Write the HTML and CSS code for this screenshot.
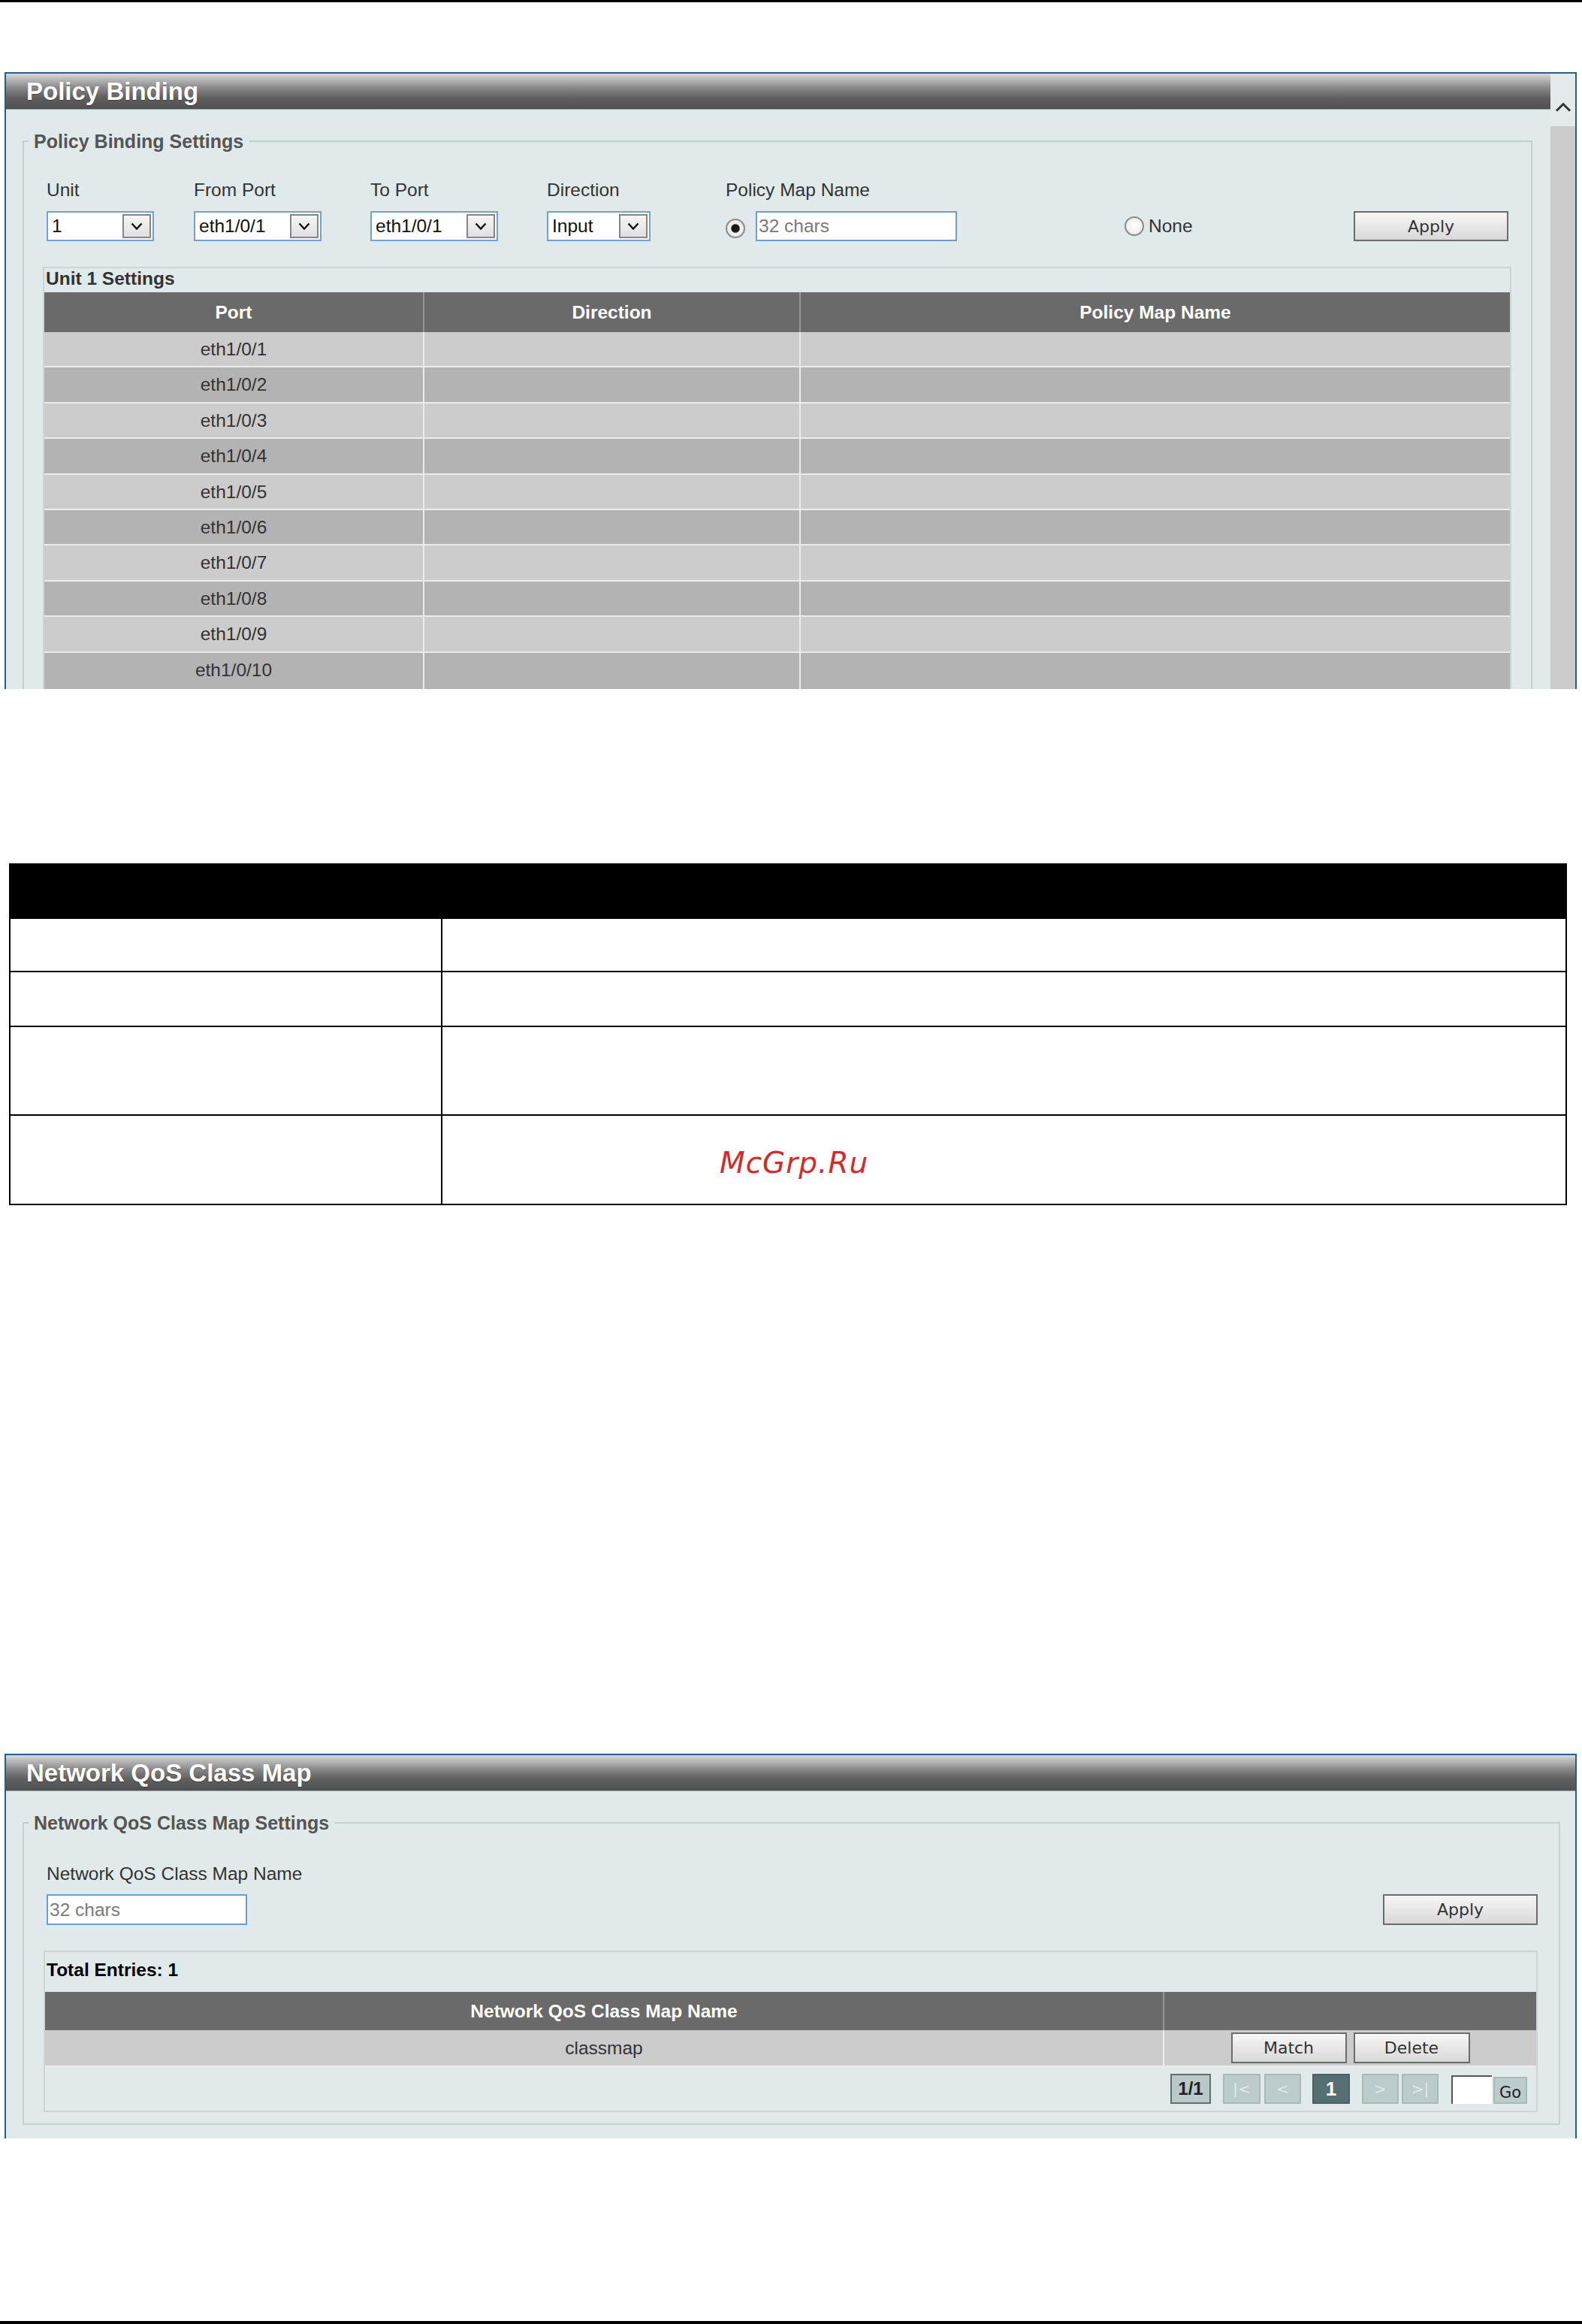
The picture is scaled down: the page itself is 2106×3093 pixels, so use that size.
FILE: index.html
```html
<!DOCTYPE html>
<html lang="en">
<head>
<meta charset="utf-8">
<title>Policy Binding / Network QoS Class Map</title>
<link rel="stylesheet" href="styles.css">
</head>
<body>
<div class="rule rule-top"></div>

<section class="panel panel-policy">
  <div class="panel-main">
    <div class="titlebar">Policy Binding</div>
    <fieldset class="fs fs-policy">
      <legend>Policy Binding Settings</legend>
      <div class="fs-inner">
        <div class="form-grid">
          <div class="lbl">Unit</div>
          <div class="lbl">From Port</div>
          <div class="lbl">To Port</div>
          <div class="lbl">Direction</div>
          <div class="lbl">Policy Map Name</div>

          <div class="ctl"><div class="sel sel-unit"><span>1</span><span class="sel-btn"><svg width="16" height="10" viewBox="0 0 16 10"><path d="M1.5 1.5 L8 8.5 L14.5 1.5" fill="none" stroke="#111" stroke-width="2.4"/></svg></span></div></div>
          <div class="ctl"><div class="sel sel-port"><span>eth1/0/1</span><span class="sel-btn"><svg width="16" height="10" viewBox="0 0 16 10"><path d="M1.5 1.5 L8 8.5 L14.5 1.5" fill="none" stroke="#111" stroke-width="2.4"/></svg></span></div></div>
          <div class="ctl"><div class="sel sel-port"><span>eth1/0/1</span><span class="sel-btn"><svg width="16" height="10" viewBox="0 0 16 10"><path d="M1.5 1.5 L8 8.5 L14.5 1.5" fill="none" stroke="#111" stroke-width="2.4"/></svg></span></div></div>
          <div class="ctl"><div class="sel sel-dir"><span>Input</span><span class="sel-btn"><svg width="16" height="10" viewBox="0 0 16 10"><path d="M1.5 1.5 L8 8.5 L14.5 1.5" fill="none" stroke="#111" stroke-width="2.4"/></svg></span></div></div>
          <div class="ctl ctl-policy"><input class="radio" type="radio" name="pm" checked><input class="txt txt-policy" type="text" placeholder="32 chars"></div>
          <div class="ctl ctl-none"><input class="radio" type="radio" name="pm"><span class="none-lbl">None</span></div>
          <div class="ctl"><button class="btn btn-apply" type="button">Apply</button></div>
        </div>

        <div class="listbox listbox-unit">
          <div class="lb-title lb-title-unit">Unit 1 Settings</div>
          <div class="tbl">
            <div class="tr tr-ports tr-head"><div class="th">Port</div><div class="th">Direction</div><div class="th">Policy Map Name</div></div>
            <div class="tr tr-ports tr-body"><div class="td">eth1/0/1</div><div class="td"></div><div class="td"></div></div>
            <div class="tr tr-ports tr-body"><div class="td">eth1/0/2</div><div class="td"></div><div class="td"></div></div>
            <div class="tr tr-ports tr-body"><div class="td">eth1/0/3</div><div class="td"></div><div class="td"></div></div>
            <div class="tr tr-ports tr-body"><div class="td">eth1/0/4</div><div class="td"></div><div class="td"></div></div>
            <div class="tr tr-ports tr-body"><div class="td">eth1/0/5</div><div class="td"></div><div class="td"></div></div>
            <div class="tr tr-ports tr-body"><div class="td">eth1/0/6</div><div class="td"></div><div class="td"></div></div>
            <div class="tr tr-ports tr-body"><div class="td">eth1/0/7</div><div class="td"></div><div class="td"></div></div>
            <div class="tr tr-ports tr-body"><div class="td">eth1/0/8</div><div class="td"></div><div class="td"></div></div>
            <div class="tr tr-ports tr-body"><div class="td">eth1/0/9</div><div class="td"></div><div class="td"></div></div>
            <div class="tr tr-ports tr-body tr-last"><div class="td">eth1/0/10</div><div class="td"></div><div class="td"></div></div>
          </div>
        </div>
      </div>
    </fieldset>
  </div>
  <div class="scrollbar">
    <div class="sb-up"><svg width="22" height="13" viewBox="0 0 22 13"><path d="M2 11.5 L11 2.5 L20 11.5" fill="none" stroke="#333" stroke-width="3"/></svg></div>
  </div>
</section>

<div class="doc">
  <div class="doc-head"></div>
  <div class="doc-row r1"><div></div><div></div></div>
  <div class="doc-row r2"><div></div><div></div></div>
  <div class="doc-row r3"><div></div><div></div></div>
  <div class="doc-row r4"><div></div><div><div class="wm">McGrp.Ru</div></div></div>
</div>

<section class="panel panel-qos">
  <div class="titlebar">Network QoS Class Map</div>
  <fieldset class="fs fs-qos">
    <legend>Network QoS Class Map Settings</legend>
    <div class="fs-inner">
      <div class="qos-form">
        <div class="lbl">Network QoS Class Map Name</div>
        <div class="qos-row">
          <input class="txt txt-qos" type="text" placeholder="32 chars">
          <button class="btn btn-apply" type="button">Apply</button>
        </div>
      </div>
      <div class="listbox listbox-qos">
        <div class="lb-title lb-title-total">Total Entries: 1</div>
        <div class="tbl">
          <div class="tr tr-qos tr-head"><div class="th">Network QoS Class Map Name</div><div class="th"></div></div>
          <div class="tr tr-qos tr-body"><div class="td">classmap</div><div class="td td-actions"><button class="btn btn-match" type="button">Match</button><button class="btn btn-delete" type="button">Delete</button></div></div>
        </div>
        <div class="pager">
          <span class="pg pg-total">1/1</span>
          <span class="pg pg-first">|&lt;</span>
          <span class="pg pg-prev">&lt;</span>
          <span class="pg pg-cur">1</span>
          <span class="pg pg-next">&gt;</span>
          <span class="pg pg-last">&gt;|</span>
          <input class="pg-input" type="text">
          <span class="pg pg-go">Go</span>
        </div>
      </div>
    </div>
  </fieldset>
</section>

<div class="rule rule-bottom"></div>
</body>
</html>
```

FILE: styles.css
```css
html, body {
  margin: 0;
  padding: 0;
  background: #ffffff;
}
body {
  width: 2106px;
  font-family: "Liberation Sans", Arial, sans-serif;
  color: #333;
}

.rule { background: #000; }
.rule-top { height: 3px; }
.rule-bottom { height: 4px; margin-top: 243px; }

/* ---------- panels ---------- */
.panel {
  margin-left: 6px;
  width: 2093px;
  box-sizing: border-box;
  border: 2px solid #245f8f;
  border-bottom: 0;
  background: #e1eaea;
  overflow: hidden;
}
.panel-policy {
  margin-top: 93px;
  height: 821px;
  display: flex;
}
.panel-qos {
  margin-top: 730px;
  height: 512px;
}
.panel-main {
  flex: 1;
  min-width: 0;
}
.scrollbar {
  width: 33px;
  flex: none;
  background: #cbcbcb;
}
.sb-up {
  height: 70px;
  box-sizing: border-box;
  padding-top: 38px;
  background: #e4e9e9;
  display: flex;
  justify-content: center;
  align-items: flex-start;
}

.titlebar {
  height: 47px;
  border-bottom: 1px solid #a3abab;
  background: linear-gradient(#dadada 0%, #b4b4b4 18%, #858585 42%, #5f5f60 68%, #505052 100%);
  color: #fff;
  font-weight: bold;
  font-size: 33px;
  line-height: 47px;
  padding-left: 27px;
  text-shadow: 0 1px 1px rgba(0, 0, 0, 0.35);
  white-space: nowrap;
}

/* ---------- fieldsets ---------- */
.fs {
  border: 2px solid #c4d1d1;
  min-width: 0;
}
.fs legend {
  padding: 0 7px;
  font-weight: bold;
  font-size: 25px;
  line-height: 28px;
  color: #555;
}
.fs-policy {
  margin: 28px 24px 0 22px;
  padding: 0 26px 0 6px;
}
.fs-policy .fs-inner { margin-left: 19px; }
.fs-qos {
  margin: 28px 20px 0 22px;
  padding: 0 28px 15px 6px;
}
.fs-qos .fs-inner { margin-left: 20px; }

/* ---------- form ---------- */
.lbl {
  font-size: 24.5px;
  line-height: 28px;
  color: #333;
  white-space: nowrap;
}
.form-grid {
  display: grid;
  grid-template-columns: 196px 235px 235px 238px 531px 305px 206px;
  grid-template-rows: 28px 40px;
  row-gap: 14px;
  margin: 37px 0 0 5px;
}
.form-grid .lbl { grid-row: 1; }
.ctl {
  grid-row: 2;
  display: flex;
  align-items: center;
}

.sel {
  height: 40px;
  box-sizing: border-box;
  border: 2px solid #76a0d2;
  background: #fff;
  display: flex;
  align-items: center;
  justify-content: space-between;
  padding: 0 2px 0 5px;
  font-size: 24.5px;
  color: #111;
}
.sel-unit { width: 143px; }
.sel-port { width: 170px; }
.sel-dir { width: 138px; }
.sel-btn {
  width: 38px;
  height: 32px;
  box-sizing: border-box;
  border: 2px solid #858585;
  background: linear-gradient(#f6f6f6, #e0e0e0);
  display: flex;
  align-items: center;
  justify-content: center;
}

.radio {
  -webkit-appearance: none;
  appearance: none;
  margin: 0;
  width: 26px;
  height: 26px;
  box-sizing: border-box;
  border-radius: 50%;
  border: 2px solid #8a8a8a;
  background: radial-gradient(circle at 50% 45%, #ffffff 0, #f2f2f2 55%, #d6d6d6 100%);
  flex: none;
}
.radio:checked {
  background: radial-gradient(circle at 50% 50%, #1a1a1a 0, #1a1a1a 5px, #f4f4f4 6.5px, #d8d8d8 100%);
}
.ctl-policy .radio { margin-top: 5px; }

.txt {
  height: 40px;
  box-sizing: border-box;
  border: 2px solid #6e9bd0;
  background: #fff;
  padding: 0 2px;
  font-family: "Liberation Sans", Arial, sans-serif;
  font-size: 24.5px;
  color: #333;
  outline: none;
}
.txt::placeholder { color: #7a7a7a; }
.txt-policy {
  width: 268px;
  margin-left: 14px;
}
.txt-qos {
  width: 267px;
  height: 41px;
}

.ctl-none .radio { margin-right: 6px; }
.none-lbl {
  font-size: 24.5px;
  color: #333;
}

.btn {
  font-family: "DejaVu Sans", Verdana, sans-serif;
  font-size: 22px;
  color: #333;
  border: 2px solid #6c6c6c;
  border-radius: 0;
  background: linear-gradient(#f7f7f7, #d8d8d8);
  height: 40px;
  padding: 0;
  margin: 0;
}
.btn-apply { width: 206px; }

/* ---------- list boxes ---------- */
.listbox {
  border: 2px solid #cbd5d5;
  margin-top: 34px;
}
.lb-title {
  font-weight: bold;
  font-size: 24.5px;
  padding-left: 2px;
  white-space: nowrap;
}
.lb-title-unit {
  height: 32px;
  line-height: 28px;
  color: #333;
}
.lb-title-total {
  height: 53px;
  line-height: 48px;
  color: #000;
}

.tr { display: grid; }
.tr-ports { grid-template-columns: 506px 501px 1fr; }
.tr-qos { grid-template-columns: 1490px 1fr; }

.th {
  background: #6a6a6a;
  color: #fff;
  font-weight: bold;
  font-size: 24.5px;
  text-align: center;
  box-sizing: border-box;
  border-right: 2px solid #959595;
  white-space: nowrap;
}
.th:last-child { border-right: 0; }
.tr-ports .th { height: 53px; line-height: 53px; }
.tr-qos .th { height: 51px; line-height: 51px; }

.td {
  box-sizing: border-box;
  border-right: 2px solid #ececec;
  border-bottom: 2px solid #ececec;
  text-align: center;
  font-size: 24.5px;
  color: #333;
}
.td:last-child { border-right: 0; }
.tr-ports .td { height: 47.4px; line-height: 45px; }
.tr-ports.tr-last .td { height: 52px; border-bottom: 0; }
.tr-qos .td { height: 49px; line-height: 47px; }

.tr-body:nth-child(even) .td { background: #cccccc; }
.tr-body:nth-child(odd) .td { background: #b3b3b3; }

.td-actions {
  display: flex;
  justify-content: center;
  align-items: center;
  gap: 9px;
}
.btn-match { width: 154px; height: 41px; }
.btn-delete { width: 155px; height: 41px; }

/* ---------- qos form ---------- */
.qos-form { margin: 40px 0 0 4px; }
.qos-row {
  display: flex;
  justify-content: space-between;
  align-items: center;
  margin-top: 13px;
}
.qos-row .btn-apply { height: 41px; }

/* ---------- pager ---------- */
.pager {
  height: 58px;
  box-sizing: border-box;
  display: flex;
  justify-content: flex-end;
  align-items: flex-end;
  padding: 0 12px 9px 0;
}
.pg {
  height: 40px;
  box-sizing: border-box;
  border: 2px solid #a9b9b9;
  background: #bccbcc;
  color: #e2e9e9;
  font-family: "DejaVu Sans", Verdana, sans-serif;
  font-size: 20px;
  display: flex;
  align-items: center;
  justify-content: center;
}
.pg-total {
  width: 54px;
  margin-right: 16px;
  border-color: #5f6f70;
  background: #b9c9ca;
  color: #222;
  font-family: "Liberation Sans", Arial, sans-serif;
  font-weight: bold;
  font-size: 24px;
}
.pg-first { width: 50px; margin-right: 5px; }
.pg-prev { width: 49px; margin-right: 15px; }
.pg-cur {
  width: 50px;
  margin-right: 16px;
  background: #566f74;
  border-color: #4a6064;
  color: #fff;
  font-family: "Liberation Sans", Arial, sans-serif;
  font-weight: bold;
  font-size: 26px;
}
.pg-next { width: 49px; margin-right: 4px; }
.pg-last { width: 49px; margin-right: 17px; }
.pg-input {
  width: 54px;
  height: 38px;
  box-sizing: border-box;
  margin: 0 2px 0 0;
  padding: 0;
  border: 0;
  border-top: 2px solid #555;
  border-left: 2px solid #555;
  background: #fff;
  outline: none;
}
.pg-go {
  width: 45px;
  height: 36px;
  color: #222;
  font-size: 21px;
  align-items: flex-end;
  padding-bottom: 1px;
}

/* ---------- document table ---------- */
.doc {
  margin: 232px 0 0 12px;
  width: 2074px;
  box-sizing: border-box;
  border-left: 2px solid #000;
  border-right: 2px solid #000;
}
.doc-head {
  height: 74px;
  background: #000;
}
.doc-row {
  display: grid;
  grid-template-columns: 575px 1fr;
  box-sizing: border-box;
  border-bottom: 2px solid #000;
}
.doc-row > div:first-child { border-right: 2px solid #000; }
.r1 { height: 71px; }
.r2 { height: 73px; }
.r3 { height: 118px; }
.r4 { height: 119px; }
.wm {
  padding: 40px 0 0 369px;
  color: #d62a2a;
  font-family: "DejaVu Sans", Verdana, sans-serif;
  font-style: italic;
  font-size: 39px;
  line-height: 45px;
  letter-spacing: 1px;
}
```
